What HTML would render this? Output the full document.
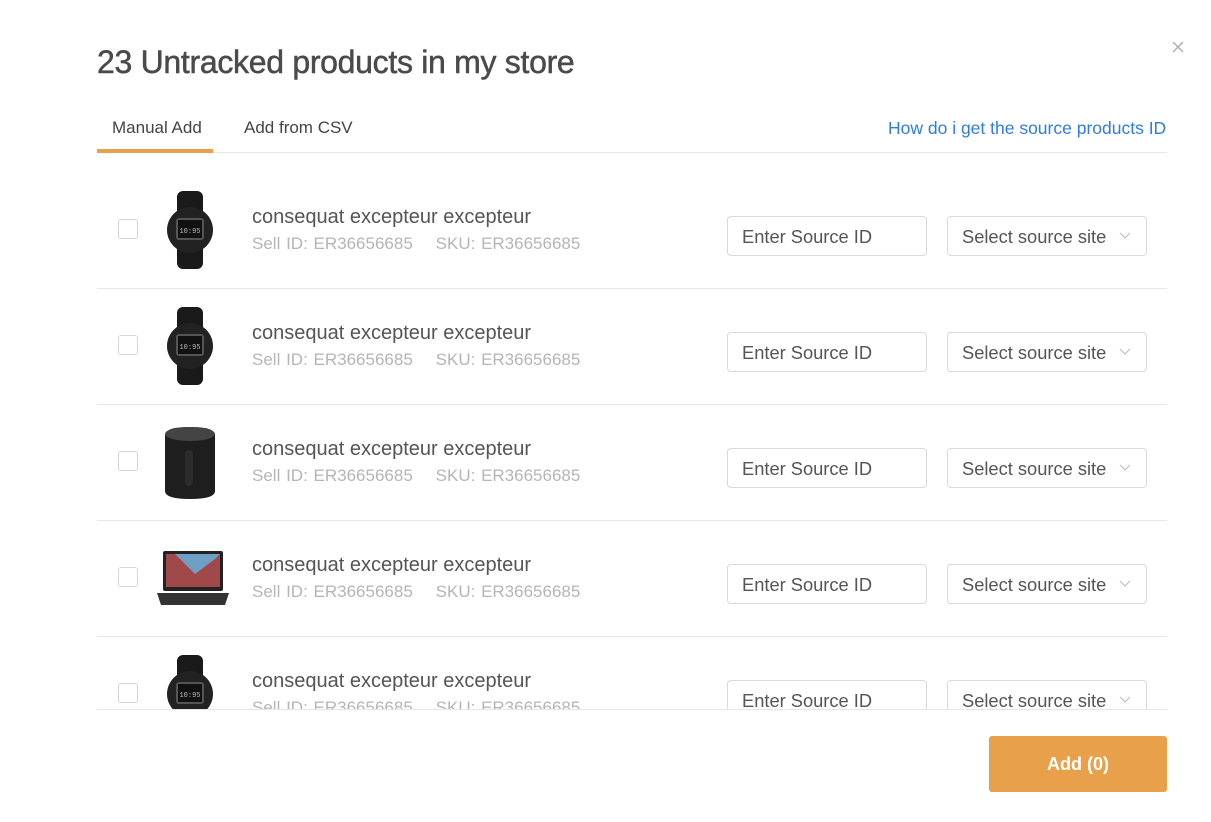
<!DOCTYPE html>
<html><head><meta charset="utf-8"><style>
*{margin:0;padding:0;box-sizing:border-box}
body{width:1211px;height:822px;background:#fff;font-family:"Liberation Sans",sans-serif;position:relative;overflow:hidden;color:#555}
.a{position:absolute}
h1{position:absolute;left:97px;top:44px;font-size:32px;font-weight:normal;color:#4a4a4a;letter-spacing:-0.3px;-webkit-text-stroke:0.5px #4a4a4a}
.tab{font-size:17px;color:#444;top:118px}
.row{position:absolute;left:97px;width:1070px;height:116px;border-bottom:1px solid #e6e6e6}
.cb{position:absolute;left:21px;width:20px;height:20px;border:1px solid #d6d6d6;border-radius:3px;background:#fff}
.img{position:absolute;left:60px}
.t{position:absolute;left:155px;font-size:20px;color:#555}
.s{position:absolute;left:155px;font-size:17px;color:#b5b5b5;word-spacing:1px}
.in{position:absolute;left:630px;width:200px;height:40px;border:1px solid #d9d9d9;border-radius:4px;font-size:18.3px;color:#555;padding:9px 0 0 14px}
.sel{position:absolute;left:850px;width:200px;height:40px;border:1px solid #d9d9d9;border-radius:4px;font-size:18.3px;color:#555;padding:9px 0 0 14px;white-space:nowrap}
.sel svg{position:absolute;right:15px;top:15px}
</style></head><body>
<h1>23 Untracked products in my store</h1>
<svg class="a" style="left:1172px;top:41px" width="12" height="12"><path d="M1 1L11 11M11 1L1 11" stroke="#aaa" stroke-width="1.3"/></svg>
<div class="a tab" style="left:112px">Manual Add</div>
<div class="a tab" style="left:244px">Add from CSV</div>
<div class="a" style="left:888px;top:118px;font-size:17.5px;color:#2f7de1">How do i get the source products ID</div>
<div class="a" style="left:97px;top:152px;width:1070px;height:1px;background:#e6e6e6"></div>
<div class="a" style="left:97px;top:149px;width:116px;height:4px;background:#e8a04b"></div>
<div class="a" style="left:0;top:173px;width:1211px;height:536px;overflow:hidden">
<div class="row" style="top:0"></div>
<div class="row" style="top:116px"></div>
<div class="row" style="top:232px"></div>
<div class="row" style="top:348px"></div>
<div class="row" style="top:464px;border:none"></div>
</div>
<div class="a" style="left:97px;top:709px;width:1070px;height:1px;background:#e6e6e6"></div>
<div class="a" style="left:0;top:173px;width:1211px;height:536px;overflow:hidden">
<div class="row" style="top:0;border:none">
<div class="cb" style="top:46px"></div>
<svg class="img" style="top:18px" width="66" height="78" viewBox="0 0 66 78"><rect x="20" y="0" width="26" height="78" rx="6" fill="#1a1a1a"/><circle cx="33" cy="39" r="23" fill="#222"/><rect x="19" y="27" width="28" height="22" rx="3" fill="#555"/><rect x="21" y="29" width="24" height="18" fill="#111"/><text x="33" y="42" font-size="7" fill="#bbb" text-anchor="middle" font-family="Liberation Mono">10:95</text></svg>
<div class="t" style="top:33px">consequat excepteur excepteur</div>
<div class="s" style="top:61px">Sell ID: ER36656685 &nbsp;&nbsp; SKU: ER36656685</div>
<div class="in" style="top:43px">Enter Source ID</div>
<div class="sel" style="top:43px">Select source site<svg width="12" height="8"><path d="M1 1L6 6L11 1" stroke="#bbb" fill="none"/></svg></div>
</div>
<div class="row" style="top:116px;border:none">
<div class="cb" style="top:46px"></div>
<svg class="img" style="top:18px" width="66" height="78" viewBox="0 0 66 78"><rect x="20" y="0" width="26" height="78" rx="6" fill="#1a1a1a"/><circle cx="33" cy="39" r="23" fill="#222"/><rect x="19" y="27" width="28" height="22" rx="3" fill="#555"/><rect x="21" y="29" width="24" height="18" fill="#111"/><text x="33" y="42" font-size="7" fill="#bbb" text-anchor="middle" font-family="Liberation Mono">10:95</text></svg>
<div class="t" style="top:33px">consequat excepteur excepteur</div>
<div class="s" style="top:61px">Sell ID: ER36656685 &nbsp;&nbsp; SKU: ER36656685</div>
<div class="in" style="top:43px">Enter Source ID</div>
<div class="sel" style="top:43px">Select source site<svg width="12" height="8"><path d="M1 1L6 6L11 1" stroke="#bbb" fill="none"/></svg></div>
</div>
<div class="row" style="top:232px;border:none">
<div class="cb" style="top:46px"></div>
<svg class="img" style="top:20px" width="66" height="76" viewBox="0 0 66 76"><path d="M8 10Q8 2 33 2Q58 2 58 10L58 66Q58 74 33 74Q8 74 8 66Z" fill="#1e1e1e"/><ellipse cx="33" cy="9" rx="25" ry="7" fill="#444"/><rect x="28" y="25" width="8" height="36" rx="4" fill="#2c2c2c"/></svg>
<div class="t" style="top:33px">consequat excepteur excepteur</div>
<div class="s" style="top:61px">Sell ID: ER36656685 &nbsp;&nbsp; SKU: ER36656685</div>
<div class="in" style="top:43px">Enter Source ID</div>
<div class="sel" style="top:43px">Select source site<svg width="12" height="8"><path d="M1 1L6 6L11 1" stroke="#bbb" fill="none"/></svg></div>
</div>
<div class="row" style="top:348px;border:none">
<div class="cb" style="top:46px"></div>
<svg class="img" style="top:28px;left:58px" width="76" height="58" viewBox="0 0 76 58"><rect x="8" y="2" width="60" height="40" rx="2" fill="#222"/><rect x="11" y="5" width="54" height="33" fill="#a0484a"/><path d="M20 5L40 25L60 10L65 5Z" fill="#6f9fc4"/><path d="M2 44L74 44L70 56L6 56Z" fill="#333"/></svg>
<div class="t" style="top:33px">consequat excepteur excepteur</div>
<div class="s" style="top:61px">Sell ID: ER36656685 &nbsp;&nbsp; SKU: ER36656685</div>
<div class="in" style="top:43px">Enter Source ID</div>
<div class="sel" style="top:43px">Select source site<svg width="12" height="8"><path d="M1 1L6 6L11 1" stroke="#bbb" fill="none"/></svg></div>
</div>
<div class="row" style="top:464px;border:none">
<div class="cb" style="top:46px"></div>
<svg class="img" style="top:18px" width="66" height="78" viewBox="0 0 66 78"><rect x="20" y="0" width="26" height="78" rx="6" fill="#1a1a1a"/><circle cx="33" cy="39" r="23" fill="#222"/><rect x="19" y="27" width="28" height="22" rx="3" fill="#555"/><rect x="21" y="29" width="24" height="18" fill="#111"/><text x="33" y="42" font-size="7" fill="#bbb" text-anchor="middle" font-family="Liberation Mono">10:95</text></svg>
<div class="t" style="top:33px">consequat excepteur excepteur</div>
<div class="s" style="top:61px">Sell ID: ER36656685 &nbsp;&nbsp; SKU: ER36656685</div>
<div class="in" style="top:43px">Enter Source ID</div>
<div class="sel" style="top:43px">Select source site<svg width="12" height="8"><path d="M1 1L6 6L11 1" stroke="#bbb" fill="none"/></svg></div>
</div>
</div>
<div class="a" style="left:989px;top:736px;width:178px;height:56px;background:#e8a04b;border-radius:3px;color:#fff;font-size:18px;font-weight:bold;text-align:center;line-height:56px">Add (0)</div>
</body></html>
